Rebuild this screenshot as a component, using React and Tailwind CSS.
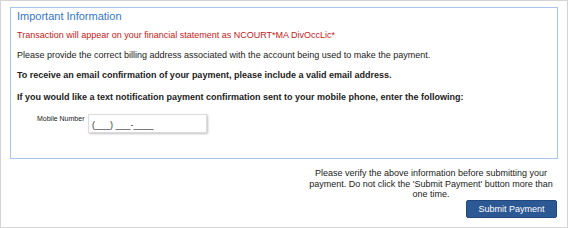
export default function App() {
  return (
    <div
      className="w-[568px] h-[228px] border border-[#d4d4d4] bg-white text-[#222]"
      style={{ fontFamily: '"Liberation Sans", Arial, sans-serif' }}
    >
      <div className="px-[9px] pt-[6px]">
        <div className="border border-[#a8c6ec] h-[152px] px-[6px]">
          <h2 className="text-[11px] leading-[14px] pt-[1px] text-[#3576c8]">Important Information</h2>
          <p className="text-[9px] leading-[11px] mt-[7px] text-[#c41a1a]">
            Transaction will appear on your financial statement as NCOURT*MA DivOccLic*
          </p>
          <p className="text-[9px] leading-[11px] mt-[9px]">
            Please provide the correct billing address associated with the account being used to make the payment.
          </p>
          <p className="text-[9px] leading-[11px] mt-[9px] font-bold">
            To receive an email confirmation of your payment, please include a valid email address.
          </p>
          <p className="text-[9px] leading-[11px] mt-[11px] font-bold">
            If you would like a text notification payment confirmation sent to your mobile phone, enter the following:
          </p>
          <div className="flex items-start mt-[11px] pl-[20px]">
            <label className="text-[7px] leading-[9px] w-[51px] whitespace-nowrap">Mobile Number</label>
            <div className="w-[119px] h-[19px] border border-[#dcdcdc] shadow-[1px_1px_2px_rgba(0,0,0,0.25)] bg-white text-[9px] leading-[10px] pl-[3px] pt-[5px] text-[#333]">
              (___) ___-____
            </div>
          </div>
        </div>
      </div>
      <div className="flex justify-end pr-[10px] pt-[9px]">
        <div className="w-[252px] flex flex-col items-end">
          <p className="w-full text-center text-[9px] leading-[10.5px]">
            Please verify the above information before submitting your payment. Do not click the 'Submit Payment' button more than one time.
          </p>
          <button className="w-[91px] h-[18px] bg-[#2c5893] border border-[#22497d] rounded-[2px] text-white text-[9px] leading-[14px]">
            Submit Payment
          </button>
        </div>
      </div>
    </div>
  );
}
